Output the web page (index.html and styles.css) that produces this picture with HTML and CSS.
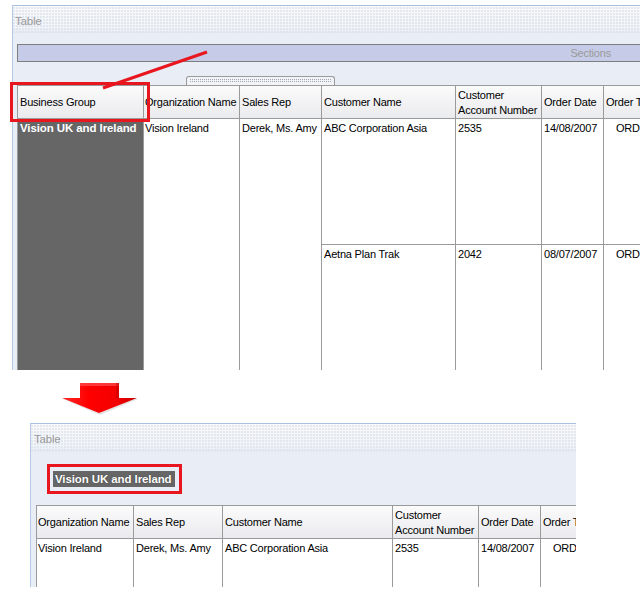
FILE: index.html
```html
<!DOCTYPE html>
<html>
<head>
<meta charset="utf-8">
<title>Table sections</title>
<link rel="stylesheet" href="styles.css">
</head>
<body>
<div class="shot shot-top">
  <div class="panel panel-top">
    <div class="titlebar"><span class="title">Table</span></div>
    <div class="sections">Sections</div>
    <div class="tab"><div class="tab-grip"></div></div>
    <table class="grid grid-top">
      <thead>
        <tr>
          <th class="w126">Business Group</th>
          <th class="w96 tight">Organization Name</th>
          <th class="w82">Sales Rep</th>
          <th class="w134">Customer Name</th>
          <th class="w86 two">Customer<br>Account Number</th>
          <th class="w62">Order Date</th>
          <th class="w80">Order Type</th>
        </tr>
      </thead>
      <tbody>
        <tr class="row-a">
          <td rowspan="2" class="group">Vision UK and Ireland</td>
          <td rowspan="2" class="tight">Vision Ireland</td>
          <td rowspan="2">Derek, Ms. Amy</td>
          <td>ABC Corporation Asia</td>
          <td>2535</td>
          <td>14/08/2007</td>
          <td class="ord">ORDER</td>
        </tr>
        <tr class="row-b">
          <td>Aetna Plan Trak</td>
          <td>2042</td>
          <td>08/07/2007</td>
          <td class="ord">ORDER</td>
        </tr>
      </tbody>
    </table>
  </div>
  <svg class="pointer" width="643" height="130" viewBox="0 0 643 130">
    <line x1="207" y1="52" x2="103" y2="88" stroke="#e8161e" stroke-width="3"/>
  </svg>
  <div class="callout callout-top"></div>
</div>

<div class="arrow-row">
  <svg class="arrow" width="84" height="36" viewBox="0 0 84 36">
    <defs>
      <linearGradient id="ag" x1="0" y1="0" x2="1" y2="0">
        <stop offset="0" stop-color="#ff2a2a"/>
        <stop offset="0.35" stop-color="#ff0000"/>
        <stop offset="0.75" stop-color="#f20000"/>
        <stop offset="1" stop-color="#c80000"/>
      </linearGradient>
    </defs>
    <polygon points="5,18 80,18 42,34" fill="#b0b0b0" opacity="0.35"/>
    <polygon points="22,2 61,2 61,17 79,17 41,32 4,17 22,17" fill="url(#ag)"/>
    <polygon points="22,2 61,2 61,5 22,5" fill="#ff5a5a" opacity="0.6"/>
    <polygon points="58,2 61,2 61,17 58,18" fill="#c40000" opacity="0.5"/>
  </svg>
</div>

<div class="shot shot-bottom">
  <div class="panel panel-bottom">
    <div class="titlebar"><span class="title">Table</span></div>
    <div class="group-label">Vision UK and Ireland</div>
    <table class="grid grid-bottom">
      <thead>
        <tr>
          <th class="w97 tight">Organization Name</th>
          <th class="w89">Sales Rep</th>
          <th class="w170">Customer Name</th>
          <th class="w86 two">Customer<br>Account Number</th>
          <th class="w62">Order Date</th>
          <th class="w80">Order Type</th>
        </tr>
      </thead>
      <tbody>
        <tr class="row-c">
          <td class="tight">Vision Ireland</td>
          <td>Derek, Ms. Amy</td>
          <td>ABC Corporation Asia</td>
          <td>2535</td>
          <td>14/08/2007</td>
          <td class="ord">ORDER</td>
        </tr>
      </tbody>
    </table>
  </div>
  <div class="callout callout-bottom"></div>
</div>
</body>
</html>
```

FILE: styles.css
```css
html, body {
  margin: 0;
  padding: 0;
  background: #ffffff;
}
body {
  font-family: "Liberation Sans", Arial, sans-serif;
  font-size: 11px;
  letter-spacing: -0.2px;
  color: #000;
  width: 643px;
  height: 593px;
  overflow: hidden;
}

.shot {
  position: relative;
}
.shot-top {
  height: 370px;
  padding-top: 5px;
  box-sizing: border-box;
}
.shot-bottom {
  height: 164px;
}

.panel {
  background: #e9eef6;
  border-top: 1px solid #a9c1e1;
  border-left: 1px solid #b5c9e4;
  overflow: hidden;
  box-sizing: border-box;
}
.panel-top {
  margin-left: 12px;
  width: 628px;
  height: 365px;
}
.panel-bottom {
  margin-left: 30px;
  width: 546px;
  height: 164px;
}

.titlebar {
  height: 27px;
  background-color: #f5f7fa;
  background-image:
    radial-gradient(circle at 1px 1px, #d9dfe8 0.6px, transparent 0.9px),
    linear-gradient(#f8f9fb, #f1f4f8 80%, #e4e9f2);
  background-size: 3px 3px, 100% 100%;
  background-position: 0 1px, 0 0;
  display: flex;
  align-items: center;
  padding-left: 2px;
  box-sizing: border-box;
}
.panel-bottom .titlebar {
  height: 28px;
  padding-left: 3px;
}
.title {
  color: #9a9a9a;
  font-size: 11.5px;
  padding-top: 2px;
}

.sections {
  margin-top: 11px;
  margin-left: 4px;
  margin-right: -10px;
  height: 18px;
  box-sizing: border-box;
  background: #c6cce7;
  border: 1px solid #7e7e7e;
  color: #9a9a9a;
  text-align: right;
  padding-right: 38px;
  line-height: 16px;
}

.tab {
  margin-top: 14px;
  margin-left: 173px;
  width: 149px;
  height: 9px;
  box-sizing: border-box;
  border: 1px solid #9a9a9a;
  border-bottom: none;
  border-radius: 3px 3px 0 0;
  background: #f2f3f6;
  padding: 2px 3px 0 3px;
}
.tab-grip {
  height: 3px;
  background-image: radial-gradient(circle at 0.5px 0.5px, #8e939c 0.5px, transparent 0.8px);
  background-size: 2px 2px;
  opacity: 0.8;
}

.grid {
  border-collapse: separate;
  border-spacing: 0;
  table-layout: fixed;
  border-top: 1px solid #9a9a9a;
  border-left: 1px solid #9a9a9a;
  background: #fff;
}
.grid-top {
  margin-left: 4px;
  width: 667px;
}
.grid-bottom {
  margin-left: 5px;
  width: 585px;
}
.grid th,
.grid td {
  box-sizing: border-box;
  border-right: 1px solid #9a9a9a;
  border-bottom: 1px solid #9a9a9a;
  padding: 0 0 0 2px;
  white-space: nowrap;
  overflow: hidden;
  font-weight: normal;
  text-align: left;
}
.grid th {
  height: 33px;
  vertical-align: middle;
  background: linear-gradient(#fbfbfb, #f3f3f5 50%, #eaebee);
  line-height: 15px;
}
.grid th.two {
  line-height: 15px;
  padding-top: 1px;
}
.grid td {
  vertical-align: top;
  padding-top: 3px;
  line-height: 13px;
}
.grid .tight {
  padding-left: 1px;
}
.grid td.ord {
  padding-left: 12px;
}

.row-a td { height: 126px; }
.row-b td { height: 126px; }
.row-c td { height: 60px; }

.grid td.group {
  background: #666666;
  color: #ffffff;
  font-weight: bold;
  font-size: 11.5px;
  letter-spacing: -0.1px;
  padding-left: 2px;
  padding-top: 2px;
  border-top: 1px solid #5a5a5a;
}

.w126 { width: 126px; }
.w96 { width: 96px; }
.w82 { width: 82px; }
.w134 { width: 134px; }
.w86 { width: 86px; }
.w62 { width: 62px; }
.w80 { width: 80px; }
.w97 { width: 97px; }
.w89 { width: 89px; }
.w170 { width: 170px; }

.group-label {
  margin-top: 19px;
  margin-left: 22px;
  width: 122px;
  height: 16px;
  line-height: 16px;
  box-sizing: border-box;
  background: #666666;
  color: #ffffff;
  font-weight: bold;
  font-size: 11.5px;
  letter-spacing: -0.1px;
  padding-left: 2px;
  text-shadow: 0 0 1px #333;
}
.panel-bottom .grid {
  margin-top: 18px;
}

.arrow-row {
  height: 53px;
  padding-top: 11px;
  padding-left: 58px;
  box-sizing: border-box;
}
.arrow {
  display: block;
}

.pointer {
  position: absolute;
  left: 0;
  top: 0;
  pointer-events: none;
}
.callout {
  position: absolute;
  border: 3px solid #e8161e;
  box-sizing: border-box;
}
.callout-top {
  left: 10px;
  top: 82px;
  width: 140px;
  height: 40px;
}
.callout-bottom {
  left: 47px;
  top: 41px;
  width: 135px;
  height: 30px;
}
```
